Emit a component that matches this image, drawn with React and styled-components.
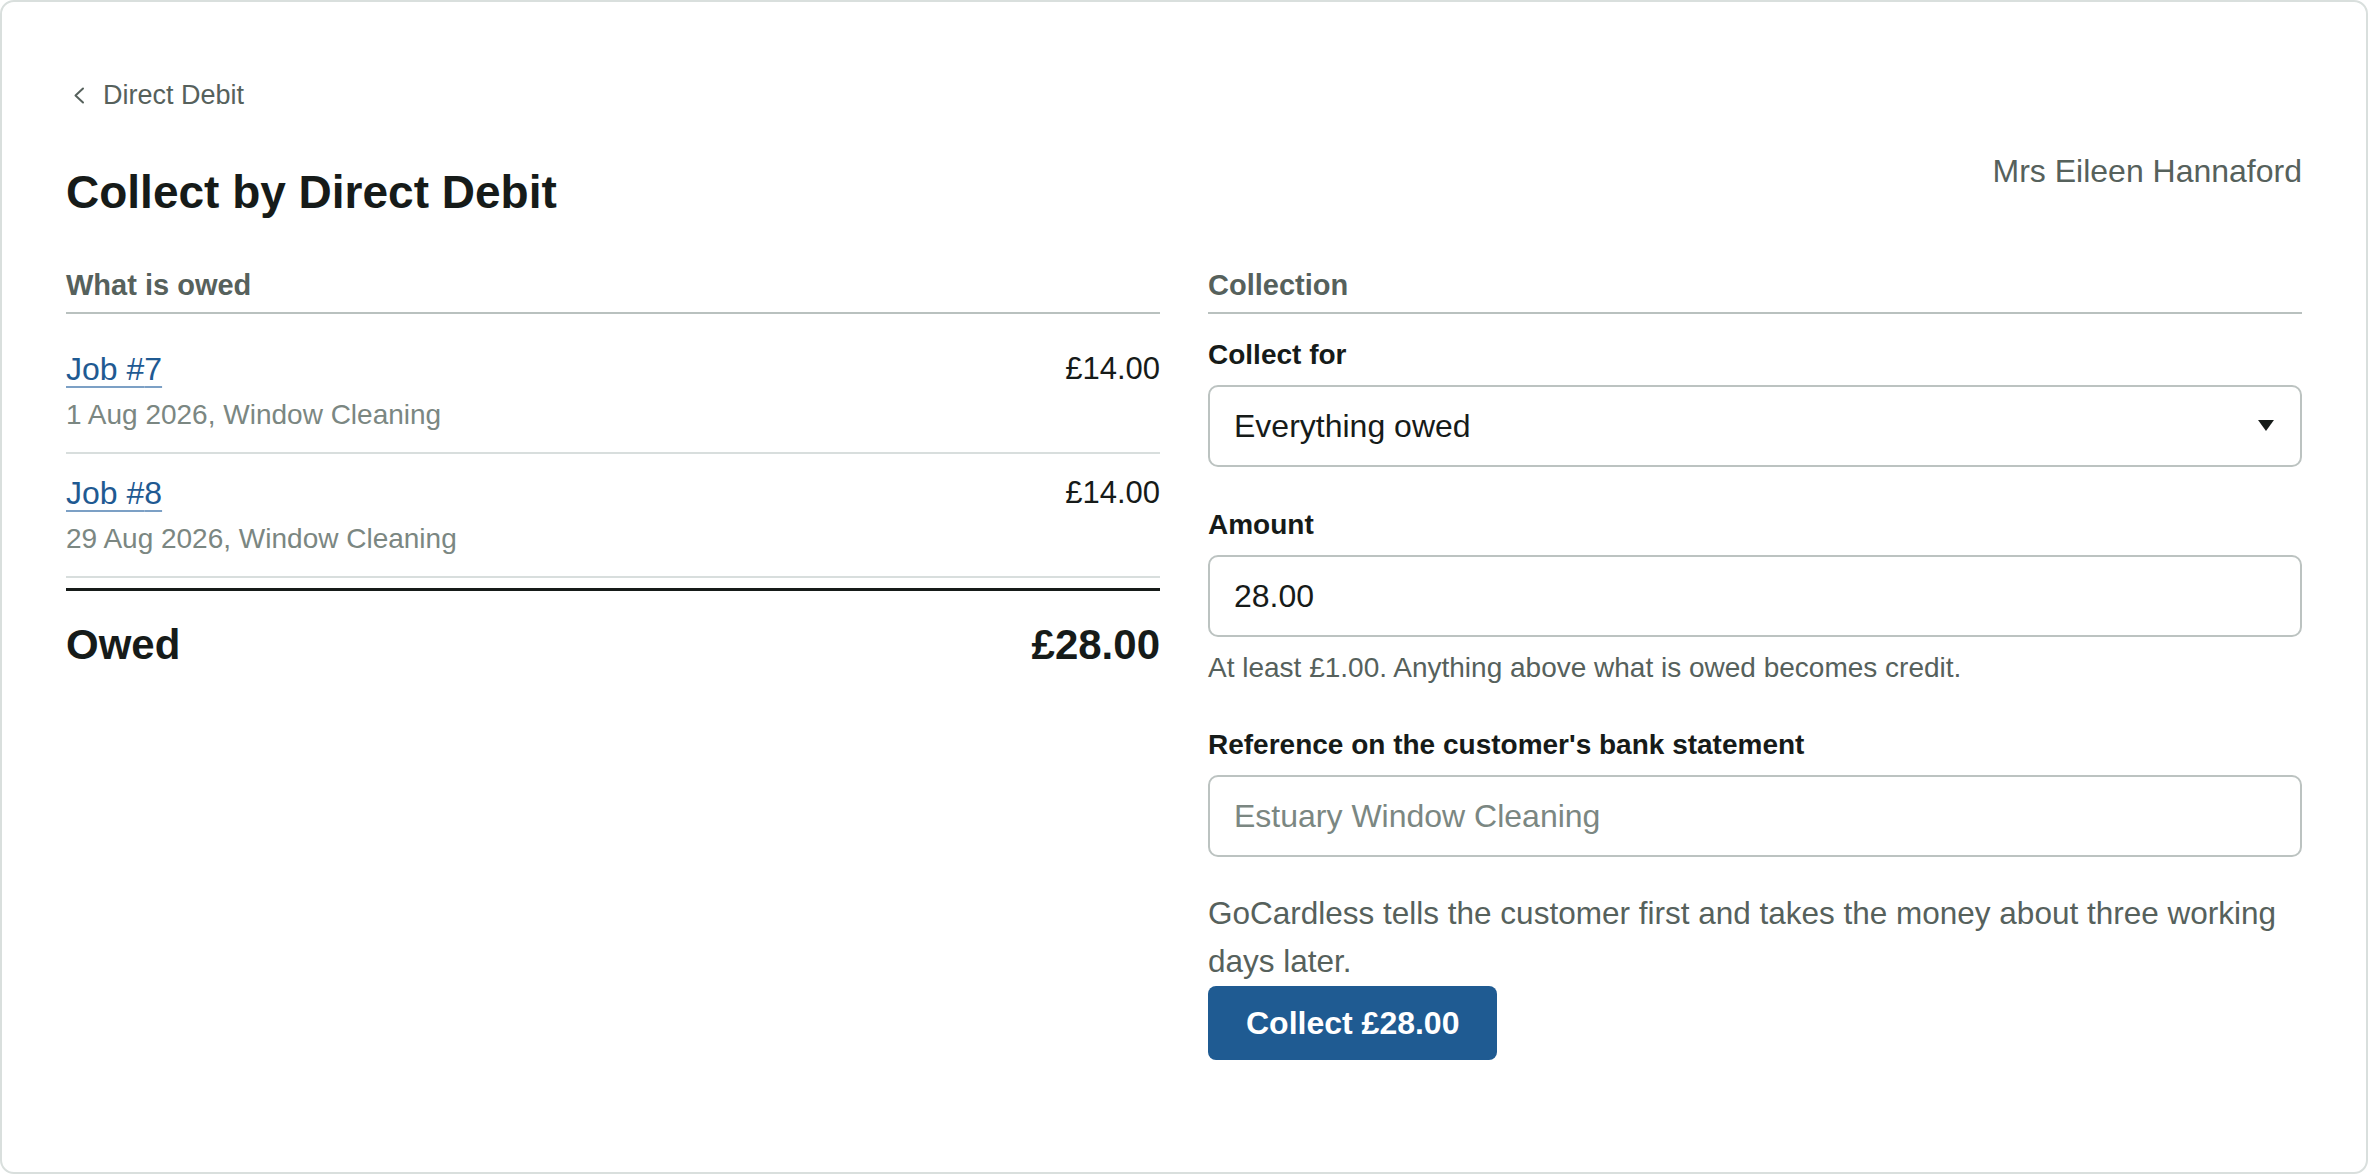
import styled, { createGlobalStyle } from "styled-components";

//------ Data ------//

const owedJobs = [
    { id: 7, date: "1 Aug 2026", service: "Window Cleaning", amount: "£14.00" },
    { id: 8, date: "29 Aug 2026", service: "Window Cleaning", amount: "£14.00" },
];

/**
 *
 * @returns collect by direct debit page
 */
export default function App() {
    return (
        <>
            <GlobalStyle />
            <Card>
                <BackLink href="#">
                    <svg width="12" height="17" viewBox="0 0 12 17" fill="none">
                        <polyline
                            points="10,1.5 2.5,8.5 10,15.5"
                            stroke="#56615c"
                            strokeWidth="2"
                            strokeLinecap="round"
                            strokeLinejoin="round"
                        />
                    </svg>
                    Direct Debit
                </BackLink>

                <Header>
                    <Title>Collect by Direct Debit</Title>
                    <Customer>Mrs Eileen Hannaford</Customer>
                </Header>

                <Columns>
                    <section>
                        <SectionTitle>What is owed</SectionTitle>
                        <JobList>
                            {owedJobs.map((job) => (
                                <JobRow key={job.id}>
                                    <div>
                                        <JobLink href="#">Job #{job.id}</JobLink>
                                        <JobMeta>
                                            {job.date}, {job.service}
                                        </JobMeta>
                                    </div>
                                    <JobAmount>{job.amount}</JobAmount>
                                </JobRow>
                            ))}
                        </JobList>
                        <TotalRow>
                            <span>Owed</span>
                            <span>£28.00</span>
                        </TotalRow>
                    </section>

                    <Form onSubmit={(e) => e.preventDefault()}>
                        <SectionTitle>Collection</SectionTitle>

                        <Field $first>
                            <Label htmlFor="collect-for">Collect for</Label>
                            <SelectWrap>
                                <Select id="collect-for" defaultValue="all">
                                    <option value="all">Everything owed</option>
                                    <option value="job7">Job #7</option>
                                    <option value="job8">Job #8</option>
                                </Select>
                                <Caret width="16" height="11" viewBox="0 0 16 11">
                                    <polygon points="0,0 16,0 8,11" fill="#161b19" />
                                </Caret>
                            </SelectWrap>
                        </Field>

                        <Field>
                            <Label htmlFor="amount">Amount</Label>
                            <Input id="amount" defaultValue="28.00" />
                            <Hint>At least £1.00. Anything above what is owed becomes credit.</Hint>
                        </Field>

                        <Field>
                            <Label htmlFor="reference">Reference on the customer's bank statement</Label>
                            <Input id="reference" placeholder="Estuary Window Cleaning" />
                        </Field>

                        <Note>
                            GoCardless tells the customer first and takes the money about three
                            working days later.
                        </Note>
                        <CollectButton type="submit">Collect £28.00</CollectButton>
                    </Form>
                </Columns>
            </Card>
        </>
    );
}

/**
 * page style
 */
const GlobalStyle = createGlobalStyle`
    html, body {
        margin: 0;
        background: #ffffff;
    }
    body {
        font-family: "Liberation Sans", Arial, sans-serif;
        color: #161b19;
    }
    *, *::before, *::after {
        box-sizing: border-box;
    }
`;

const Card = styled.main`
    width: 100vw;
    height: 100vh;
    border: 2px solid #d9dfdd;
    border-radius: 14px;
    padding: 73px 64px 0;
    background: #ffffff;
`;

const BackLink = styled.a`
    display: flex;
    align-items: center;
    gap: 18px;
    width: fit-content;
    padding-left: 7px;
    font-size: 27px;
    line-height: 40px;
    color: #56615c;
    text-decoration: none;
`;

const Header = styled.header`
    display: flex;
    justify-content: space-between;
    align-items: flex-start;
    margin-top: 33px;
`;

const Title = styled.h1`
    margin: 0;
    padding-top: 16px;
    font-size: 46px;
    line-height: 56px;
    font-weight: 700;
    color: #161b19;
`;

const Customer = styled.div`
    font-size: 32px;
    line-height: 46px;
    color: #56615c;
`;

const Columns = styled.div`
    display: grid;
    grid-template-columns: 1fr 1fr;
    column-gap: 48px;
    margin-top: 48px;
`;

const SectionTitle = styled.h2`
    margin: 0;
    padding-bottom: 10px;
    border-bottom: 2px solid #b9c1bf;
    font-size: 29px;
    line-height: 34px;
    font-weight: 700;
    color: #56615c;
`;

const JobList = styled.ul`
    list-style: none;
    margin: 16px 0 0;
    padding: 0;
`;

const JobRow = styled.li`
    display: flex;
    justify-content: space-between;
    align-items: flex-start;
    padding: 19px 0;
    border-bottom: 2px solid #d8dedd;
`;

const JobLink = styled.a`
    display: block;
    width: fit-content;
    font-size: 32px;
    line-height: 40px;
    color: #1f5a92;
    text-decoration: underline;
    text-decoration-color: #7ca0c5;
    text-decoration-thickness: 2px;
    text-underline-offset: 6px;
`;

const JobMeta = styled.div`
    margin-top: 8px;
    font-size: 28px;
    line-height: 36px;
    color: #7b8782;
`;

const JobAmount = styled.div`
    font-size: 31px;
    line-height: 40px;
    color: #161b19;
`;

const TotalRow = styled.div`
    display: flex;
    justify-content: space-between;
    margin-top: 10px;
    padding-top: 30px;
    border-top: 3px solid #161b19;
    font-size: 42px;
    line-height: 48px;
    font-weight: 700;
    color: #161b19;
`;

const Form = styled.form`
    display: flex;
    flex-direction: column;
`;

const Field = styled.div`
    display: flex;
    flex-direction: column;
    margin-top: ${(p) => (p.$first ? "24px" : "41px")};
`;

const Label = styled.label`
    margin-bottom: 13px;
    font-size: 28px;
    line-height: 34px;
    font-weight: 700;
    color: #161b19;
`;

const SelectWrap = styled.div`
    position: relative;
`;

const fieldBox = `
    width: 100%;
    height: 82px;
    border: 2px solid #bcc3c1;
    border-radius: 10px;
    padding: 0 24px;
    background: #ffffff;
    font-family: inherit;
    font-size: 32px;
    color: #161b19;
    outline: none;
`;

const Select = styled.select`
    ${fieldBox}
    appearance: none;
    padding-right: 70px;
`;

const Caret = styled.svg`
    position: absolute;
    right: 28px;
    top: 50%;
    transform: translateY(-55%);
    pointer-events: none;
`;

const Input = styled.input`
    ${fieldBox}

    &::placeholder {
        color: #7b8782;
    }
`;

const Hint = styled.p`
    margin: 12px 0 0;
    font-size: 28px;
    line-height: 38px;
    color: #56615c;
`;

const Note = styled.p`
    margin: 32px 0 0;
    font-size: 31.5px;
    line-height: 48px;
    color: #56615c;
`;

const CollectButton = styled.button`
    align-self: flex-start;
    margin-top: 1px;
    height: 74px;
    padding: 0 38px;
    border: none;
    border-radius: 8px;
    background: #1f5b92;
    color: #ffffff;
    font-family: inherit;
    font-size: 32px;
    font-weight: 700;
    cursor: pointer;
`;
